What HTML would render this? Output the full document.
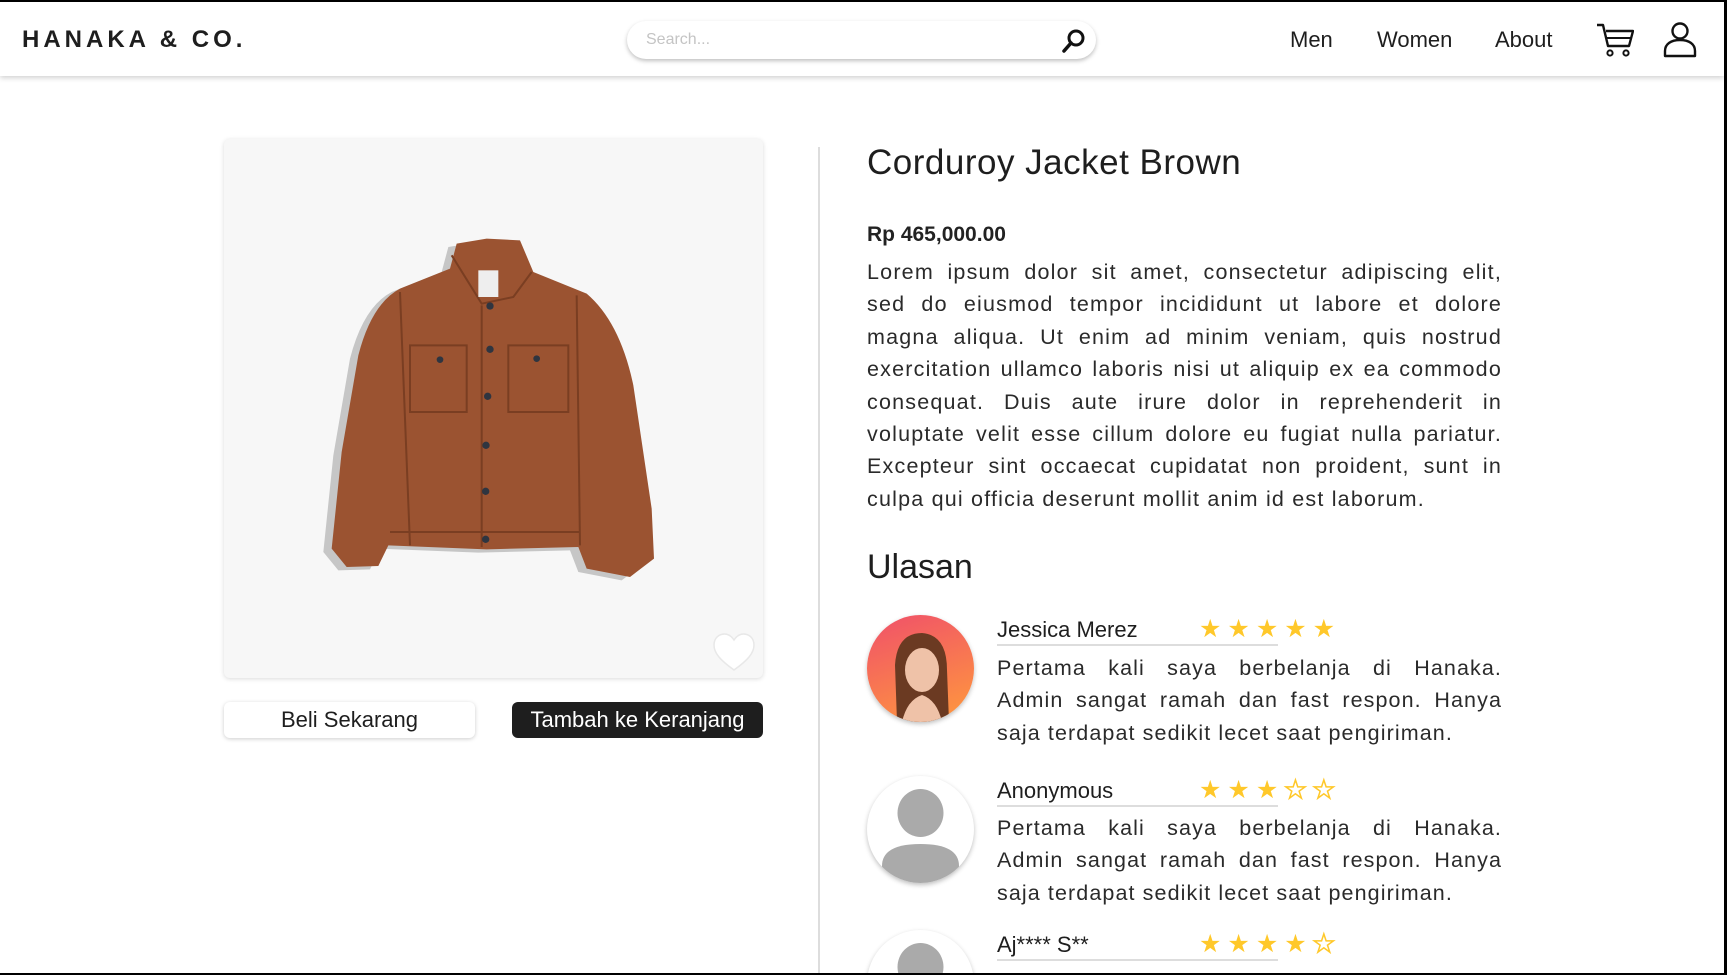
<!DOCTYPE html>
<html><head><meta charset="utf-8"><style>
*{box-sizing:border-box;margin:0;padding:0}
html,body{width:1727px;height:975px;overflow:hidden;background:#fff;font-family:"Liberation Sans",Arial,sans-serif;color:#1e1e1e}
body{position:relative;border-top:2px solid #000;border-right:3px solid #000;border-bottom:2px solid #000}
#w{position:absolute;left:0;top:0;width:1724px;height:971px;overflow:hidden}
.a{position:absolute}
header{position:absolute;left:0;top:0;width:1724px;height:74px;background:#fff;box-shadow:0 2px 5px rgba(0,0,0,.18)}
.logo{left:22px;top:24px;font-size:24px;font-weight:bold;letter-spacing:4px}
.search{left:627px;top:19px;width:469px;height:38px;border-radius:19px;box-shadow:0 2px 4px rgba(0,0,0,.25);background:#fff}
.search span{position:absolute;left:19px;top:10px;font-size:16px;color:#c4c4c4}
.nav{font-size:22px;top:25px}
.card{left:224px;top:137px;width:539px;height:539px;background:#f7f7f7;border-radius:6px;box-shadow:0 1px 5px rgba(0,0,0,.15)}
.btn{top:700px;width:251px;height:36px;border-radius:6px;font-size:22px;text-align:center;line-height:36px}
.p{left:867px;width:635px;font-size:21.5px;line-height:32.4px;color:#2a2a2a;letter-spacing:1.2px}
.p div,.rt div{text-align:justify;text-align-last:justify;white-space:nowrap}
.p div.l,.rt div.l{text-align-last:left}
.name{left:997px;font-size:22px;width:281px;border-bottom:2px solid #ddd;padding-bottom:1px}
.stars{left:1199px;font-size:25px;color:#ffc82a;letter-spacing:6px}
.rt{left:997px;width:505px;font-size:21.5px;line-height:32.4px;color:#2a2a2a;letter-spacing:1.1px}
.av{left:867px;width:107px;height:107px;border-radius:50%;box-shadow:0 2px 5px rgba(0,0,0,.25);background:#fff;overflow:hidden}
</style></head><body><div id="w">
<header>
<div class="a logo">HANAKA &amp; CO.</div>
<div class="a search"><span>Search...</span>
<svg class="a" style="left:434px;top:7px" width="26" height="26" viewBox="0 0 26 26"><circle cx="15" cy="10" r="7" fill="none" stroke="#111" stroke-width="3"/><line x1="10" y1="15" x2="3" y2="23" stroke="#111" stroke-width="3.5" stroke-linecap="round"/></svg></div>
<div class="a nav" style="left:1290px">Men</div>
<div class="a nav" style="left:1377px">Women</div>
<div class="a nav" style="left:1495px">About</div>
<svg class="a" style="left:1596px;top:20px" width="38" height="36" viewBox="0 0 38 36"><path d="M1 3h6l5 21h21l4-15H10" fill="none" stroke="#111" stroke-width="2.4" stroke-linejoin="round"/><line x1="11" y1="16" x2="35" y2="16" stroke="#111" stroke-width="2"/><circle cx="14" cy="31" r="2.6" fill="none" stroke="#111" stroke-width="2"/><circle cx="30" cy="31" r="2.6" fill="none" stroke="#111" stroke-width="2"/></svg>
<svg class="a" style="left:1663px;top:20px" width="34" height="36" viewBox="0 0 34 36"><circle cx="17" cy="9" r="7.5" fill="none" stroke="#111" stroke-width="2.4"/><path d="M2 34v-5c0-7 6-11 15-11s15 4 15 11v5z" fill="none" stroke="#111" stroke-width="2.4" stroke-linejoin="round"/></svg>
</header>

<div class="a card"></div>
<svg class="a" style="left:300px;top:210px" width="380" height="380" viewBox="0 0 1140 1140">
<path d="M470,95 L560,80 L660,85 L700,180 L860,245 Q960,330 1000,520 L1055,890 L1062,1040 L990,1095 L860,1070 L835,1005 L560,1012 L265,1000 L235,1062 L140,1065 L95,1010 L125,720 L175,430 Q215,275 300,230 L450,170 Z" fill="#c6c6c6" transform="translate(-25,10)"/>
<path d="M470,95 L560,80 L660,85 L700,180 L860,245 Q960,330 1000,520 L1055,890 L1062,1040 L990,1095 L860,1070 L835,1005 L560,1012 L265,1000 L235,1062 L140,1065 L95,1010 L125,720 L175,430 Q215,275 300,230 L450,170 Z" fill="#9b5331"/>
<path d="M455,130 L545,275 L640,255 L695,180 M545,280 L545,1005 M330,400 L500,400 L500,600 L330,600 Z M625,400 L805,400 L805,600 L625,600 Z M270,960 L840,960 M300,240 L330,1000 M830,250 L840,1000" fill="none" stroke="#7a3e22" stroke-width="6"/>
<rect x="535" y="175" width="60" height="80" fill="#eee"/>
<g fill="#2f3540"><circle cx="570" cy="282" r="11"/><circle cx="570" cy="412" r="11"/><circle cx="563" cy="553" r="11"/><circle cx="558" cy="700" r="11"/><circle cx="557" cy="838" r="11"/><circle cx="557" cy="982" r="11"/><circle cx="420" cy="443" r="10"/><circle cx="710" cy="440" r="10"/></g>
</svg>
<svg class="a" style="left:712px;top:630px" width="44" height="40" viewBox="0 0 44 40"><path d="M22 38C8 28 2 21 2 13 2 6 7 2 12.5 2 17 2 20 5 22 8 24 5 27 2 31.5 2 37 2 42 6 42 13 42 21 36 28 22 38Z" fill="#fff" stroke="#e8e8e8" stroke-width="1.5"/></svg>
<div class="a btn" style="left:224px;background:#fff;box-shadow:0 1px 4px rgba(0,0,0,.2)">Beli Sekarang</div>
<div class="a btn" style="left:512px;background:#1e1e1e;color:#fff">Tambah ke Keranjang</div>
<div class="a" style="left:818px;top:145px;width:2px;height:830px;background:#ddd"></div>

<div class="a" style="left:867px;top:141px;font-size:35px;letter-spacing:.5px">Corduroy Jacket Brown</div>
<div class="a" style="left:867px;top:221px;font-size:21px;font-weight:bold;color:#222">Rp 465,000.00</div>
<div class="a p" style="top:254px">
<div>Lorem ipsum dolor sit amet, consectetur adipiscing elit,</div>
<div>sed do eiusmod tempor incididunt ut labore et dolore</div>
<div>magna aliqua. Ut enim ad minim veniam, quis nostrud</div>
<div>exercitation ullamco laboris nisi ut aliquip ex ea commodo</div>
<div>consequat. Duis aute irure dolor in reprehenderit in</div>
<div>voluptate velit esse cillum dolore eu fugiat nulla pariatur.</div>
<div>Excepteur sint occaecat cupidatat non proident, sunt in</div>
<div class="l">culpa qui officia deserunt mollit anim id est laborum.</div>
</div>
<div class="a" style="left:867px;top:546px;font-size:34px">Ulasan</div>

<div class="a av" style="top:613px;background:linear-gradient(160deg,#f0506a,#ff9a3c)">
<svg width="107" height="107" viewBox="0 0 107 107"><path d="M30 107 L28 50 Q30 18 55 18 Q80 20 80 55 L82 107Z" fill="#6b3a22"/><ellipse cx="55" cy="55" rx="17" ry="22" fill="#efc2a8"/><path d="M35 107 Q40 85 55 80 Q70 85 75 107Z" fill="#efc2a8"/></svg></div>
<div class="a name" style="top:615px">Jessica Merez</div>
<div class="a stars" style="top:612px">★★★★★</div>
<div class="a rt" style="top:650px"><div>Pertama kali saya berbelanja di Hanaka.</div><div>Admin sangat ramah dan fast respon. Hanya</div><div class="l">saja terdapat sedikit lecet saat pengiriman.</div></div>

<div class="a av" style="top:774px"><svg width="107" height="107" viewBox="0 0 107 107"><ellipse cx="53.5" cy="37" rx="23" ry="24" fill="#aaa"/><path d="M15 107 V90 Q15 68 53.5 68 Q92 68 92 90 V107Z" fill="#aaa"/></svg></div>
<div class="a name" style="top:776px">Anonymous</div>
<div class="a stars" style="top:773px">★★★<span style="color:#fff;-webkit-text-stroke:1.5px #ffc82a">★★</span></div>
<div class="a rt" style="top:810px"><div>Pertama kali saya berbelanja di Hanaka.</div><div>Admin sangat ramah dan fast respon. Hanya</div><div class="l">saja terdapat sedikit lecet saat pengiriman.</div></div>

<div class="a av" style="top:928px"><svg width="107" height="107" viewBox="0 0 107 107"><ellipse cx="53.5" cy="37" rx="23" ry="24" fill="#aaa"/></svg></div>
<div class="a name" style="top:930px">Aj**** S**</div>
<div class="a stars" style="top:927px">★★★★<span style="color:#fff;-webkit-text-stroke:1.5px #ffc82a">★</span></div>
</div></body></html>
